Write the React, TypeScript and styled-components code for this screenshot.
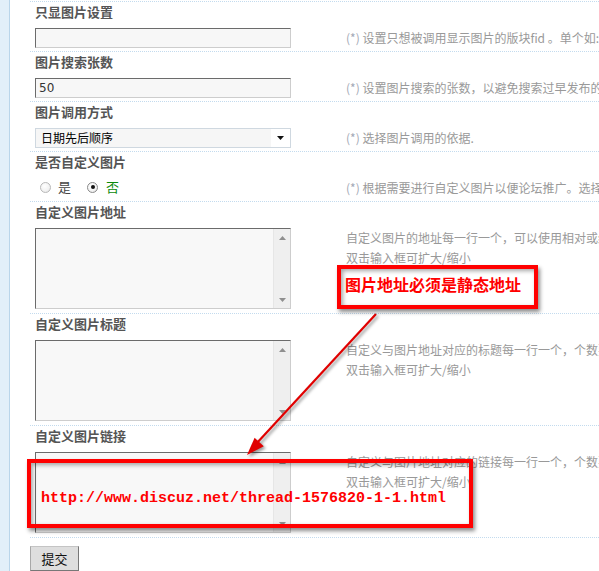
import React from 'react';
import styled, { createGlobalStyle } from 'styled-components';

const GlobalStyle = createGlobalStyle`
  html, body { margin: 0; padding: 0; background: #fff; overflow: hidden; }
  body { font-family: "Noto Sans CJK SC", "Noto Sans", sans-serif; }
`;

const Page = styled.div`
  position: relative;
  display: flex;
  width: 599px;
  height: 571px;
  overflow: hidden;
`;

const SideStrip = styled.div`
  flex: 0 0 9px;
  background: #e2eff9;
  border-right: 1px solid #b9d5ea;
`;

const Main = styled.div`
  flex: 1;
  min-width: 0;
  margin-left: 20px;
  padding-top: 1px;
`;

const Section = styled.div`
  border-top: 1px dotted #c3dbee;
`;

const Title = styled.div`
  height: 22px;
  line-height: 19px;
  padding-left: 5px;
  font-size: 13px;
  font-weight: bold;
  color: #555;
  white-space: nowrap;
`;

const Body = styled.div<{ $tall?: boolean }>`
  display: grid;
  grid-template-columns: 256px 1fr;
  column-gap: 55px;
  align-items: start;
  box-sizing: border-box;
  height: ${(p) => (p.$tall ? 89 : 27)}px;
  padding: 4px 0 0 5px;
`;

const Desc = styled.div`
  font-size: 12px;
  line-height: 20px;
  color: #999;
  white-space: nowrap;
  overflow: hidden;
`;

const Star = styled.span`
  color: #a3a9b6;
`;

const TextInput = styled.input`
  display: block;
  width: 256px;
  height: 20px;
  box-sizing: border-box;
  margin: 0;
  padding: 0 3px;
  background: #f7f7f7;
  border: 1px solid;
  border-color: #6b6b6b #cdcdcd #cdcdcd #6b6b6b;
  font: 12px "DejaVu Sans", sans-serif;
  color: #333;
  outline: none;
`;

const SelectBox = styled.div`
  display: flex;
  width: 256px;
  height: 20px;
  box-sizing: border-box;
  border: 1px solid #cfd8e0;
  background: #fff;
`;

const SelectValue = styled.div`
  flex: 1;
  background: #f6f6f6;
  font-size: 12px;
  line-height: 18px;
  padding-left: 5px;
  color: #000;
`;

const SelectArrow = styled.div`
  flex: 0 0 19px;
  display: flex;
  align-items: center;
  justify-content: center;
  background: #fff;
`;

const RadioRow = styled.div`
  display: flex;
  align-items: center;
  height: 18px;
  padding-left: 5px;
  font-size: 13px;
`;

const RadioDot = styled.span<{ $checked?: boolean }>`
  position: relative;
  width: 11px;
  height: 11px;
  box-sizing: border-box;
  border-radius: 50%;
  border: 1px solid ${(p) => (p.$checked ? '#8a8a8a' : '#b8b8b8')};
  background: radial-gradient(circle at 40% 35%, #ffffff 0%, #f2f2f2 60%, #dcdcdc 100%);
  display: flex;
  align-items: center;
  justify-content: center;
  &::after {
    content: '';
    display: ${(p) => (p.$checked ? 'block' : 'none')};
    width: 4px;
    height: 4px;
    border-radius: 50%;
    background: #111;
  }
`;

const RadioLabel = styled.span<{ $on?: boolean }>`
  margin-left: ${(p) => (p.$on ? 8 : 7)}px;
  margin-right: 16px;
  color: ${(p) => (p.$on ? '#0a8a0a' : '#444')};
  line-height: 18px;
`;

const AreaBox = styled.div`
  display: flex;
  width: 256px;
  height: 81px;
  box-sizing: border-box;
  border: 1px solid;
  border-color: #6b6b6b #cdcdcd #cdcdcd #6b6b6b;
  background: #f8f8f8;
`;

const AreaInput = styled.textarea`
  flex: 1;
  margin: 0;
  padding: 2px 3px;
  border: none;
  outline: none;
  resize: none;
  overflow: hidden;
  background: transparent;
  font: 12px "DejaVu Sans", sans-serif;
`;

const ScrollTrack = styled.div`
  flex: 0 0 16px;
  display: flex;
  flex-direction: column;
  justify-content: space-between;
  align-items: center;
  padding: 7px 0 6px;
  background: #efefef;
  border-left: 1px solid #e6e6e6;
`;

const Footer = styled.div`
  border-top: 1px dotted #c3dbee;
  padding-top: 8px;
`;

const SubmitButton = styled.button`
  display: block;
  width: 49px;
  height: 25px;
  margin: 0;
  padding: 0;
  background: #dedede;
  border: 1px solid;
  border-color: #c4c4c4 #777 #777 #a8a8a8;
  font: 13px "Noto Sans CJK SC", sans-serif;
  color: #111;
`;

const Callout = styled.div`
  position: absolute;
  box-sizing: border-box;
  border: 4px solid #ff0000;
  box-shadow: 2px 3px 4px rgba(0, 0, 0, 0.45), inset 2px 2px 4px rgba(0, 0, 0, 0.35);
  color: #ff0000;
  font-weight: bold;
  white-space: nowrap;
`;

const NoteBox = styled(Callout)`
  left: 337px;
  top: 265px;
  width: 201px;
  height: 44px;
  padding: 5px 0 0 4px;
  font-size: 16px;
  line-height: 20px;
`;

const UrlBox = styled(Callout)`
  left: 27px;
  top: 459px;
  width: 446px;
  height: 69px;
  padding: 27px 0 0 10px;
  font: bold 15px "Liberation Mono", monospace;
  line-height: 18px;
`;

const ArrowLayer = styled.svg`
  position: absolute;
  left: 0;
  top: 0;
  pointer-events: none;
  filter: drop-shadow(2px 2px 1.5px rgba(0, 0, 0, 0.4));
`;

type Setting =
  | { kind: 'input'; title: string; value: string; desc: string }
  | { kind: 'select'; title: string; value: string; desc: string }
  | { kind: 'radio'; title: string; desc: string }
  | { kind: 'area'; title: string; desc: string[] };

const settings: Setting[] = [
  { kind: 'input', title: '只显图片设置', value: '', desc: '设置只想被调用显示图片的版块fid 。单个如: 2 多个如: 2,3,6' },
  { kind: 'input', title: '图片搜索张数', value: '50', desc: '设置图片搜索的张数，以避免搜索过早发布的图片。' },
  { kind: 'select', title: '图片调用方式', value: '日期先后顺序', desc: '选择图片调用的依据.' },
  { kind: 'radio', title: '是否自定义图片', desc: '根据需要进行自定义图片以便论坛推广。选择是则下面设置有效' },
  { kind: 'area', title: '自定义图片地址', desc: ['自定义图片的地址每一行一个，可以使用相对或绝对地址', '双击输入框可扩大/缩小'] },
  { kind: 'area', title: '自定义图片标题', desc: ['自定义与图片地址对应的标题每一行一个，个数要与图片地址个数一致', '双击输入框可扩大/缩小'] },
  { kind: 'area', title: '自定义图片链接', desc: ['自定义与图片地址对应的链接每一行一个，个数要与图片地址个数一致', '双击输入框可扩大/缩小'] },
];

const UpTri = () => (
  <svg width="7" height="4" viewBox="0 0 7 4"><polygon points="3.5,0 7,4 0,4" fill="#8f8f8f" /></svg>
);
const DownTri = ({ color = '#8f8f8f' }: { color?: string }) => (
  <svg width="7" height="4" viewBox="0 0 7 4"><polygon points="0,0 7,0 3.5,4" fill={color} /></svg>
);

function Control({ s }: { s: Setting }) {
  switch (s.kind) {
    case 'input':
      return <TextInput readOnly value={s.value} />;
    case 'select':
      return (
        <SelectBox>
          <SelectValue>{s.value}</SelectValue>
          <SelectArrow>
            <DownTri color="#111" />
          </SelectArrow>
        </SelectBox>
      );
    case 'radio':
      return (
        <RadioRow>
          <RadioDot />
          <RadioLabel>是</RadioLabel>
          <RadioDot $checked />
          <RadioLabel $on>否</RadioLabel>
        </RadioRow>
      );
    case 'area':
      return (
        <AreaBox>
          <AreaInput readOnly />
          <ScrollTrack>
            <UpTri />
            <DownTri />
          </ScrollTrack>
        </AreaBox>
      );
  }
}

export default function App() {
  return (
    <Page>
      <GlobalStyle />
      <SideStrip />
      <Main>
        {settings.map((s) => (
          <Section key={s.title}>
            <Title>{s.title}</Title>
            <Body $tall={s.kind === 'area'}>
              <Control s={s} />
              <Desc>
                {s.kind === 'area' ? (
                  s.desc.map((line) => <div key={line}>{line}</div>)
                ) : (
                  <>
                    <Star>(*)</Star> {s.desc}
                  </>
                )}
              </Desc>
            </Body>
          </Section>
        ))}
        <Footer>
          <SubmitButton type="button">提交</SubmitButton>
        </Footer>
      </Main>

      <ArrowLayer width="599" height="571" viewBox="0 0 599 571">
        <line x1="376" y1="314" x2="256" y2="444" stroke="#e00000" strokeWidth="2.2" />
        <polygon points="247,455 263.8,446.2 254.6,437.8" fill="#e00000" />
      </ArrowLayer>
      <NoteBox>图片地址必须是静态地址</NoteBox>
      <UrlBox>http://www.discuz.net/thread-1576820-1-1.html</UrlBox>
    </Page>
  );
}
